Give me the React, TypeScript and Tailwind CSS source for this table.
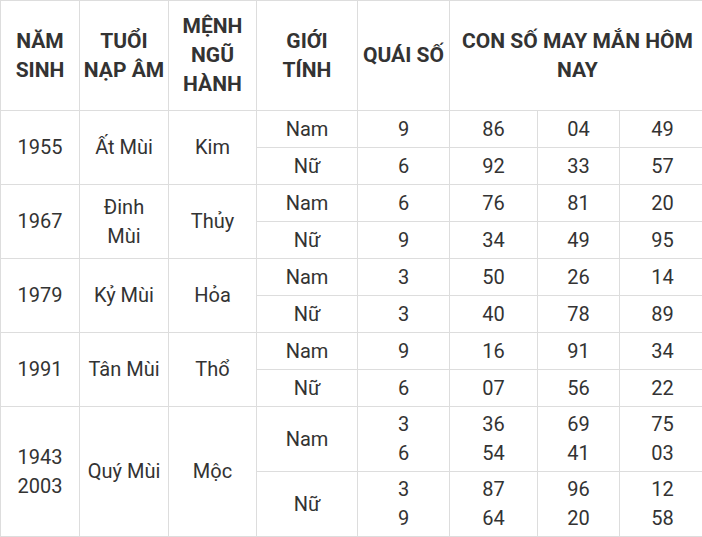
import React from "react";

type Row = { gender: string; quai: string[]; nums: string[][] };
type Group = { years: string[]; name: string[]; element: string; rows: Row[] };

const groups: Group[] = [
  {
    years: ["1955"],
    name: ["Ất Mùi"],
    element: "Kim",
    rows: [
      { gender: "Nam", quai: ["9"], nums: [["86"], ["04"], ["49"]] },
      { gender: "Nữ", quai: ["6"], nums: [["92"], ["33"], ["57"]] },
    ],
  },
  {
    years: ["1967"],
    name: ["Đinh", "Mùi"],
    element: "Thủy",
    rows: [
      { gender: "Nam", quai: ["6"], nums: [["76"], ["81"], ["20"]] },
      { gender: "Nữ", quai: ["9"], nums: [["34"], ["49"], ["95"]] },
    ],
  },
  {
    years: ["1979"],
    name: ["Kỷ Mùi"],
    element: "Hỏa",
    rows: [
      { gender: "Nam", quai: ["3"], nums: [["50"], ["26"], ["14"]] },
      { gender: "Nữ", quai: ["3"], nums: [["40"], ["78"], ["89"]] },
    ],
  },
  {
    years: ["1991"],
    name: ["Tân Mùi"],
    element: "Thổ",
    rows: [
      { gender: "Nam", quai: ["9"], nums: [["16"], ["91"], ["34"]] },
      { gender: "Nữ", quai: ["6"], nums: [["07"], ["56"], ["22"]] },
    ],
  },
  {
    years: ["1943", "2003"],
    name: ["Quý Mùi"],
    element: "Mộc",
    rows: [
      { gender: "Nam", quai: ["3", "6"], nums: [["36", "54"], ["69", "41"], ["75", "03"]] },
      { gender: "Nữ", quai: ["3", "9"], nums: [["87", "64"], ["96", "20"], ["12", "58"]] },
    ],
  },
];

const headers = [
  ["NĂM", "SINH"],
  ["TUỔI", "NẠP ÂM"],
  ["MỆNH", "NGŨ", "HÀNH"],
  ["GIỚI", "TÍNH"],
  ["QUÁI SỐ"],
];

const cell = "bg-white flex flex-col items-center justify-center text-center px-[5px]";
const head = `${cell} font-bold text-[21px]`;

function Lines({ items, className = "" }: { items: string[]; className?: string }) {
  return (
    <div className={`${cell} ${className}`}>
      {items.map((t, i) => (
        <span key={i} className="whitespace-nowrap">
          {t}
        </span>
      ))}
    </div>
  );
}

export default function App() {
  return (
    <div className="w-[702px] h-[537px] overflow-hidden bg-white">
      <div
        className="grid w-[706px] gap-px p-px bg-[#dddddd] grid-cols-[78px_88px_87px_100px_91px_87px_81px_85px] grid-rows-[109px_repeat(8,36px)_64px_64px] text-[20px] leading-[29px] text-[#333333]"
        style={{ fontFamily: "Roboto, 'Noto Sans', sans-serif" }}
      >
        {headers.map((h) => (
          <Lines key={h.join()} items={h} className="font-bold text-[21px]" />
        ))}
        <div className={`${head} col-span-3`}>CON SỐ MAY MẮN HÔM NAY</div>

        {groups.map((g) => (
          <React.Fragment key={g.years[0]}>
            <Lines items={g.years} className="row-span-2" />
            <Lines items={g.name} className="row-span-2" />
            <Lines items={[g.element]} className="row-span-2" />
            {g.rows.map((r) => (
              <React.Fragment key={r.gender}>
                <Lines items={[r.gender]} />
                <Lines items={r.quai} />
                {r.nums.map((n, i) => (
                  <Lines key={i} items={n} />
                ))}
              </React.Fragment>
            ))}
          </React.Fragment>
        ))}
      </div>
    </div>
  );
}
